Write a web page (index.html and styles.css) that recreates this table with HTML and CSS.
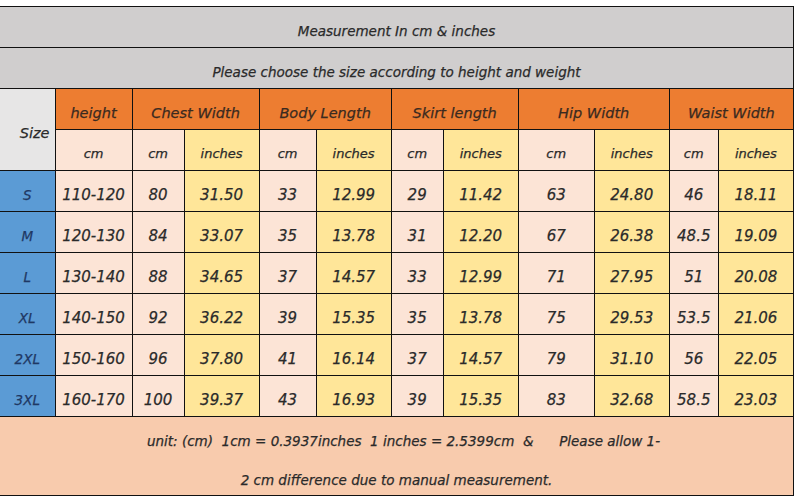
FILE: index.html
```html
<!DOCTYPE html>
<html>
<head>
<meta charset="utf-8">
<link rel="stylesheet" href="styles.css">
</head>
<body>
<table class="chart">
  <colgroup>
    <col class="c55"><col class="c77"><col class="c52"><col class="c75"><col class="c57"><col class="c75"><col class="c52"><col class="c75"><col class="c76"><col class="c75"><col class="c49"><col class="c75">
  </colgroup>
  <tr class="row"><td colspan="12" class="title">Measurement In cm &amp; inches</td></tr>
  <tr class="row"><td colspan="12" class="title">Please choose the size according to height and weight</td></tr>
  <tr class="row">
    <td rowspan="2" class="sizehead">Size</td>
    <td class="head">height</td>
    <td colspan="2" class="head">Chest Width</td>
    <td colspan="2" class="head">Body Length</td>
    <td colspan="2" class="head">Skirt length</td>
    <td colspan="2" class="head">Hip Width</td>
    <td colspan="2" class="head">Waist Width</td>
  </tr>
  <tr class="row unit">
    <td class="cm">cm</td>
    <td class="cm">cm</td><td class="in">inches</td>
    <td class="cm">cm</td><td class="in">inches</td>
    <td class="cm">cm</td><td class="in">inches</td>
    <td class="cm">cm</td><td class="in">inches</td>
    <td class="cm">cm</td><td class="in">inches</td>
  </tr>
  <tr class="row data"><td class="size">S</td><td class="cm">110-120</td><td class="cm">80</td><td class="in">31.50</td><td class="cm">33</td><td class="in">12.99</td><td class="cm">29</td><td class="in">11.42</td><td class="cm">63</td><td class="in">24.80</td><td class="cm">46</td><td class="in">18.11</td></tr>
  <tr class="row data"><td class="size">M</td><td class="cm">120-130</td><td class="cm">84</td><td class="in">33.07</td><td class="cm">35</td><td class="in">13.78</td><td class="cm">31</td><td class="in">12.20</td><td class="cm">67</td><td class="in">26.38</td><td class="cm">48.5</td><td class="in">19.09</td></tr>
  <tr class="row data"><td class="size">L</td><td class="cm">130-140</td><td class="cm">88</td><td class="in">34.65</td><td class="cm">37</td><td class="in">14.57</td><td class="cm">33</td><td class="in">12.99</td><td class="cm">71</td><td class="in">27.95</td><td class="cm">51</td><td class="in">20.08</td></tr>
  <tr class="row data"><td class="size">XL</td><td class="cm">140-150</td><td class="cm">92</td><td class="in">36.22</td><td class="cm">39</td><td class="in">15.35</td><td class="cm">35</td><td class="in">13.78</td><td class="cm">75</td><td class="in">29.53</td><td class="cm">53.5</td><td class="in">21.06</td></tr>
  <tr class="row data"><td class="size">2XL</td><td class="cm">150-160</td><td class="cm">96</td><td class="in">37.80</td><td class="cm">41</td><td class="in">16.14</td><td class="cm">37</td><td class="in">14.57</td><td class="cm">79</td><td class="in">31.10</td><td class="cm">56</td><td class="in">22.05</td></tr>
  <tr class="row data"><td class="size">3XL</td><td class="cm">160-170</td><td class="cm">100</td><td class="in">39.37</td><td class="cm">43</td><td class="in">16.93</td><td class="cm">39</td><td class="in">15.35</td><td class="cm">83</td><td class="in">32.68</td><td class="cm">58.5</td><td class="in">23.03</td></tr>
  <tr>
    <td colspan="12" class="foot">
      <div class="line l1">unit: (cm)&nbsp; 1cm = 0.3937inches&nbsp; 1 inches = 2.5399cm&nbsp; &amp;&nbsp; &nbsp; &nbsp; Please allow 1-</div>
      <div class="line">2 cm difference due to manual measurement.</div>
    </td>
  </tr>
</table>
</body>
</html>
```

FILE: styles.css
```css
html, body {
  margin: 0;
  padding: 0;
  background: #ffffff;
}
body {
  padding-top: 6px;
  font-family: "DejaVu Sans", "Verdana", sans-serif;
  font-style: italic;
  color: #2a2a2a;
  -webkit-text-stroke: 0.25px currentColor;
}
.chart {
  border-collapse: collapse;
  table-layout: fixed;
  width: 794px;
}
.c55 { width: 55px; }
.c77 { width: 77px; }
.c52 { width: 52px; }
.c75 { width: 75px; }
.c57 { width: 57px; }
.c76 { width: 76px; }
.c49 { width: 49px; }
.chart td {
  border: 1px solid #111111;
  padding: 7px 0 0 0;
  text-align: center;
  vertical-align: middle;
  white-space: nowrap;
  overflow: hidden;
}
.chart td:first-child { border-left: none; }
.row { height: 41px; }
.title {
  background: #d0cece;
  font-size: 13.5px;
}
.sizehead {
  background: #e7e6e6;
  font-size: 14.5px;
  text-align: right !important;
  padding-right: 5px !important;
}
.head {
  background: #ed7d31;
  font-size: 14.5px;
  color: #3a2a20;
}
.unit td { font-size: 13px; }
.cm { background: #fce4d6; }
.in { background: #ffe699; }
.data td { font-size: 15px; }
.size {
  background: #5b9bd5;
  color: #1f3864;
}
.data td.size { font-size: 13.5px; }
.chart td.foot {
  background: #f8cbad;
  height: 78px;
  font-size: 13.5px;
  padding: 0;
  vertical-align: top;
}
.line {
  height: 39px;
  line-height: 48px;
}
.l1 { padding-left: 14px; }
```
